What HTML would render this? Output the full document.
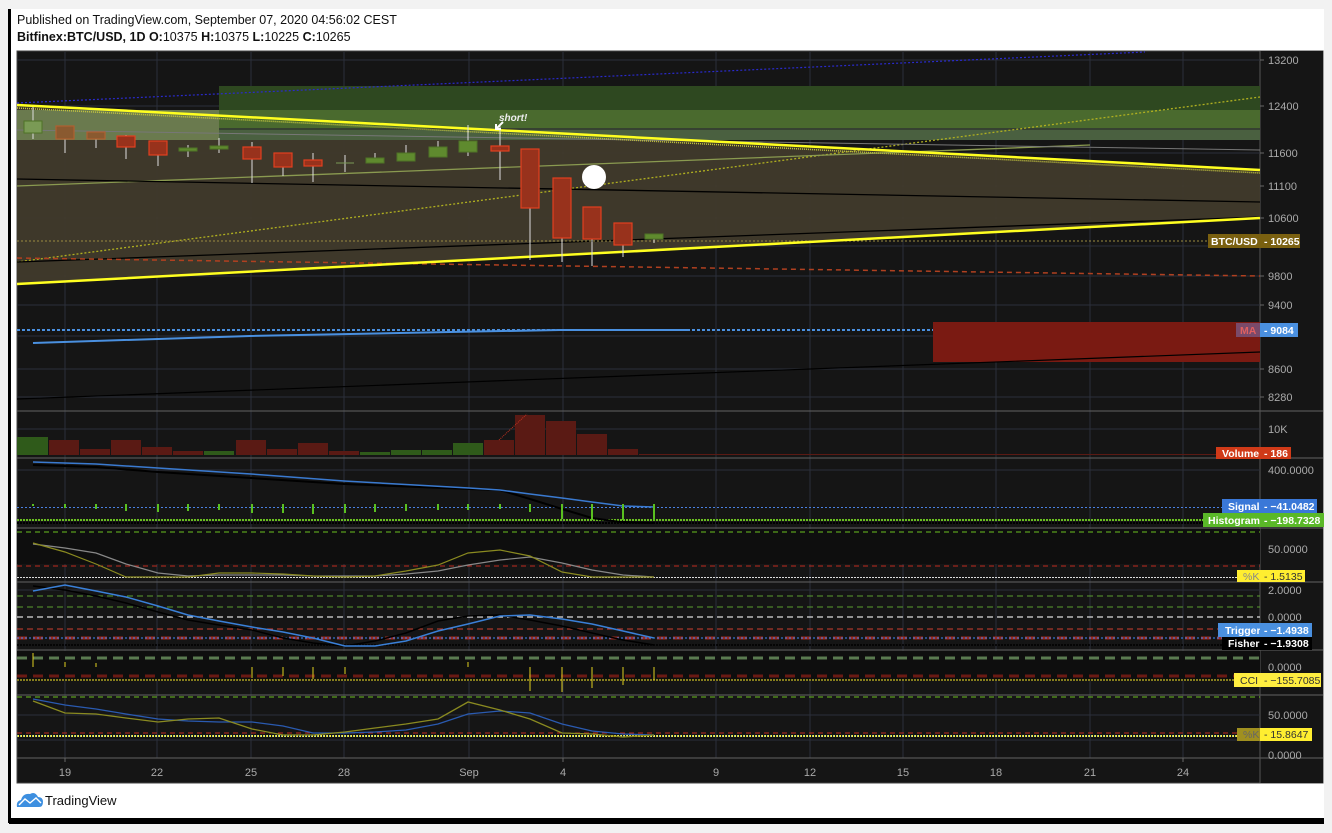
<!DOCTYPE html>
<html><head><meta charset="utf-8"><style>
html,body{margin:0;padding:0;background:#fff;width:1332px;height:833px;overflow:hidden}
svg{display:block}
text{font-family:"Liberation Sans",sans-serif}
</style></head><body>
<svg width="1332" height="833" viewBox="0 0 1332 833" xmlns="http://www.w3.org/2000/svg">
<rect x="0" y="0" width="1332" height="833" fill="#f2f2f2"/>
<rect x="9" y="9" width="1315" height="814" fill="#fff"/>
<rect x="8" y="9" width="3" height="814" fill="#000"/>
<rect x="9" y="818" width="1315" height="6" fill="#000"/>
<text x="17" y="24" font-size="12.5" fill="#111">Published on TradingView.com, September 07, 2020 04:56:02 CEST</text>
<text x="17" y="41" font-size="12.5" fill="#111"><tspan font-weight="bold">Bitfinex:BTC/USD, 1D  O:</tspan>10375 <tspan font-weight="bold">H:</tspan>10375 <tspan font-weight="bold">L:</tspan>10225 <tspan font-weight="bold">C:</tspan>10265</text>

<rect x="17" y="51" width="1306" height="732" fill="#151515" stroke="#444" stroke-width="1"/>
<rect x="1260" y="51" width="63" height="732" fill="#151515"/>
<line x1="1260" y1="51" x2="1260" y2="783" stroke="#555"/>

<g stroke="#2b303a" stroke-width="1">
<line x1="65" y1="52" x2="65" y2="758"/><line x1="157" y1="52" x2="157" y2="758"/>
<line x1="251" y1="52" x2="251" y2="758"/><line x1="344" y1="52" x2="344" y2="758"/>
<line x1="469" y1="52" x2="469" y2="758"/><line x1="563" y1="52" x2="563" y2="758"/>
<line x1="716" y1="52" x2="716" y2="758"/><line x1="810" y1="52" x2="810" y2="758"/>
<line x1="903" y1="52" x2="903" y2="758"/><line x1="996" y1="52" x2="996" y2="758"/>
<line x1="1090" y1="52" x2="1090" y2="758"/><line x1="1183" y1="52" x2="1183" y2="758"/>
</g>
<g stroke="#2b303a" stroke-width="1">
<line x1="17" y1="60" x2="1260" y2="60"/><line x1="17" y1="106" x2="1260" y2="106"/>
<line x1="17" y1="153" x2="1260" y2="153"/><line x1="17" y1="186" x2="1260" y2="186"/>
<line x1="17" y1="218" x2="1260" y2="218"/><line x1="17" y1="246" x2="1260" y2="246"/>
<line x1="17" y1="276" x2="1260" y2="276"/><line x1="17" y1="305" x2="1260" y2="305"/>
<line x1="17" y1="336" x2="1260" y2="336"/><line x1="17" y1="369" x2="1260" y2="369"/>
<line x1="17" y1="397" x2="1260" y2="397"/>
<line x1="17" y1="429" x2="1260" y2="429"/><line x1="17" y1="470" x2="1260" y2="470"/>
<line x1="17" y1="549" x2="1260" y2="549"/><line x1="17" y1="590" x2="1260" y2="590"/>
<line x1="17" y1="667" x2="1260" y2="667"/><line x1="17" y1="715" x2="1260" y2="715"/>
<line x1="17" y1="740" x2="1260" y2="740"/>
</g>
<g stroke="#555" stroke-width="1.2">
<line x1="17" y1="411" x2="1323" y2="411"/><line x1="17" y1="458" x2="1323" y2="458"/>
<line x1="17" y1="528" x2="1323" y2="528"/><line x1="17" y1="582" x2="1323" y2="582"/>
<line x1="17" y1="650" x2="1323" y2="650"/><line x1="17" y1="695" x2="1323" y2="695"/>
<line x1="17" y1="758" x2="1323" y2="758"/>
</g>

<polygon points="17,105 1260,170 1260,218 17,284" fill="#403a2b" opacity="0.95"/>
<rect x="219" y="86" width="1041" height="24" fill="#2e4820"/>
<rect x="219" y="110" width="1041" height="18" fill="#4a6a2e"/>
<rect x="219" y="128" width="1041" height="12" fill="#4a6040"/>
<line x1="219" y1="129" x2="1260" y2="129" stroke="#222" stroke-width="1"/>
<polygon points="17,110 219,110 219,140 17,140" fill="#6a7a4e"/>
<line x1="17" y1="103" x2="1145" y2="52" stroke="#2a2acc" stroke-width="1.2" stroke-dasharray="2,2"/>
<line x1="17" y1="262" x2="1260" y2="97" stroke="#b0b020" stroke-width="1.3" stroke-dasharray="2,2"/>
<line x1="17" y1="186" x2="1090" y2="145" stroke="#8a9a50" stroke-width="1.3"/>
<line x1="17" y1="130" x2="1260" y2="150" stroke="#777" stroke-width="1"/>
<line x1="17" y1="179" x2="1260" y2="202" stroke="#000" stroke-width="1.3"/>
<line x1="17" y1="262" x2="1260" y2="217" stroke="#000" stroke-width="1.3"/>
<line x1="17" y1="258" x2="1260" y2="276" stroke="#b04020" stroke-width="1.5" stroke-dasharray="5,4"/>
<line x1="17" y1="241" x2="1260" y2="241" stroke="#9a8a40" stroke-width="1" stroke-dasharray="2,2"/>
<line x1="17" y1="108" x2="1260" y2="173" stroke="#c8c840" stroke-width="1.5" stroke-dasharray="1,1"/>
<line x1="17" y1="105" x2="1260" y2="170" stroke="#ffff20" stroke-width="2.5"/>
<line x1="17" y1="284" x2="1260" y2="218" stroke="#ffff20" stroke-width="2.5"/>
<line x1="17" y1="330" x2="1260" y2="330" stroke="#4a90e0" stroke-width="2" stroke-dasharray="3,2"/>
<polyline points="33,343 250,336 450,332 560,330 690,330" fill="none" stroke="#4a90e0" stroke-width="2"/>
<rect x="933" y="322" width="327" height="40" fill="#7a1a12"/>
<line x1="17" y1="399" x2="1260" y2="352" stroke="#000" stroke-width="1.2"/>

<g stroke="#ddd" stroke-width="1">
<line x1="33" y1="107" x2="33" y2="139"/><line x1="65" y1="126" x2="65" y2="153"/>
<line x1="96" y1="132" x2="96" y2="148"/><line x1="126" y1="135" x2="126" y2="159"/>
<line x1="158" y1="141" x2="158" y2="166"/><line x1="188" y1="145" x2="188" y2="157"/>
<line x1="219" y1="138" x2="219" y2="153"/><line x1="252" y1="142" x2="252" y2="183"/>
<line x1="283" y1="153" x2="283" y2="176"/><line x1="313" y1="153" x2="313" y2="182"/>
<line x1="345" y1="155" x2="345" y2="172"/><line x1="375" y1="153" x2="375" y2="163"/>
<line x1="406" y1="145" x2="406" y2="161"/><line x1="438" y1="141" x2="438" y2="157"/>
<line x1="468" y1="125" x2="468" y2="156"/><line x1="500" y1="126" x2="500" y2="180"/>
<line x1="530" y1="149" x2="530" y2="260"/><line x1="562" y1="178" x2="562" y2="262"/>
<line x1="592" y1="207" x2="592" y2="266"/><line x1="623" y1="223" x2="623" y2="257"/>
<line x1="654" y1="234" x2="654" y2="243"/>
</g>
<g fill="#98321c" stroke="#e2401f" stroke-width="1.2">
<rect x="56" y="126" width="18" height="13" fill="#8a5a30" stroke="#b06030"/>
<rect x="87" y="132" width="18" height="7" fill="#8a5a30" stroke="#b06030"/>
<rect x="117" y="136" width="18" height="11"/>
<rect x="149" y="141" width="18" height="14"/>
<rect x="243" y="147" width="18" height="12"/>
<rect x="274" y="153" width="18" height="14"/>
<rect x="304" y="160" width="18" height="6"/>
<rect x="491" y="146" width="18" height="5"/>
<rect x="521" y="149" width="18" height="59"/>
<rect x="553" y="178" width="18" height="60"/>
<rect x="583" y="207" width="18" height="32"/>
<rect x="614" y="223" width="18" height="22"/>
</g>
<g fill="#5f8a2e" stroke="#4f7326" stroke-width="1">
<rect x="24" y="121" width="18" height="12" fill="#7a9a55"/>
<rect x="179" y="148" width="18" height="3"/>
<rect x="210" y="146" width="18" height="3"/>
<line x1="336" y1="163" x2="354" y2="163" stroke="#7a9a55"/>
<rect x="366" y="158" width="18" height="5"/>
<rect x="397" y="153" width="18" height="8"/>
<rect x="429" y="147" width="18" height="10"/>
<rect x="459" y="141" width="18" height="11"/>
<rect x="645" y="234" width="18" height="5"/>
</g>
<circle cx="594" cy="177" r="12" fill="#fff"/>
<text x="499" y="121" font-size="10" font-style="italic" font-weight="bold" fill="#eee">short!</text>
<path d="M503 122 L496 129 M496 124 L496 129 L501 129" stroke="#fff" stroke-width="2" fill="none"/>

<g fill="#5a1a14">
<rect x="49" y="440" width="30" height="15"/><rect x="80" y="449" width="30" height="6"/>
<rect x="111" y="440" width="30" height="15"/><rect x="142" y="447" width="30" height="8"/>
<rect x="173" y="451" width="30" height="4"/><rect x="236" y="440" width="30" height="15"/>
<rect x="267" y="449" width="30" height="6"/><rect x="298" y="443" width="30" height="12"/>
<rect x="329" y="451" width="30" height="4"/><rect x="484" y="440" width="30" height="15"/>
<rect x="515" y="415" width="30" height="40"/><rect x="546" y="421" width="30" height="34"/>
<rect x="577" y="434" width="30" height="21"/><rect x="608" y="449" width="30" height="6"/>
<rect x="639" y="454" width="621" height="1"/>
</g>
<g fill="#2f5a1a">
<rect x="17" y="437" width="31" height="18"/><rect x="204" y="451" width="30" height="4"/>
<rect x="360" y="452" width="30" height="3"/><rect x="391" y="450" width="30" height="5"/>
<rect x="422" y="450" width="30" height="5"/><rect x="453" y="443" width="30" height="12"/>
</g>
<line x1="499" y1="440" x2="527" y2="414" stroke="#c03020" stroke-dasharray="1,1"/>

<line x1="17" y1="507.5" x2="1260" y2="507.5" stroke="#4a80e0" stroke-dasharray="2,2"/>
<line x1="17" y1="520" x2="1260" y2="520" stroke="#6ac020" stroke-width="2" stroke-dasharray="2,1"/>
<line x1="17" y1="523" x2="1260" y2="523" stroke="#000" stroke-width="2" stroke-dasharray="2,1"/>
<polyline points="33,465 96,467 158,472 251,478 344,484 469,489 500,490 530,499 562,509 592,518 620,522 654,523" fill="none" stroke="#000" stroke-width="2"/>
<polyline points="33,462 96,464 158,468 251,474 344,481 469,488 500,490 530,494 562,498 592,502 623,506 654,507" fill="none" stroke="#3a7ad0" stroke-width="1.5"/>
<g stroke="#5ac020" stroke-width="2">
<line x1="33" y1="504" x2="33" y2="506"/><line x1="65" y1="504" x2="65" y2="508"/><line x1="96" y1="504" x2="96" y2="509"/><line x1="126" y1="504" x2="126" y2="511"/><line x1="158" y1="504" x2="158" y2="512"/><line x1="188" y1="504" x2="188" y2="511"/><line x1="219" y1="504" x2="219" y2="510"/><line x1="252" y1="504" x2="252" y2="513"/><line x1="283" y1="504" x2="283" y2="513"/><line x1="313" y1="504" x2="313" y2="514"/><line x1="345" y1="504" x2="345" y2="513"/><line x1="375" y1="504" x2="375" y2="512"/><line x1="406" y1="504" x2="406" y2="511"/><line x1="438" y1="504" x2="438" y2="510"/><line x1="468" y1="504" x2="468" y2="510"/><line x1="500" y1="504" x2="500" y2="509"/><line x1="530" y1="504" x2="530" y2="512"/><line x1="562" y1="504" x2="562" y2="519"/><line x1="592" y1="504" x2="592" y2="520"/><line x1="623" y1="504" x2="623" y2="520"/><line x1="654" y1="504" x2="654" y2="520"/>
</g>

<rect x="17" y="529" width="1243" height="35" fill="#0e0e0e"/>
<line x1="17" y1="532" x2="1260" y2="532" stroke="#6ac020" stroke-dasharray="5,4"/>
<line x1="17" y1="566" x2="1260" y2="566" stroke="#c02a20" stroke-dasharray="5,4"/>
<line x1="17" y1="577.5" x2="1260" y2="577.5" stroke="#ddd" stroke-dasharray="2,1"/>
<polyline points="33,544 65,548 96,553 126,564 158,573 188,576 219,575 252,575 283,575 313,576 345,576 375,576 406,574 438,571 468,565 500,560 530,557 562,563 592,570 623,575 654,577" fill="none" stroke="#888" stroke-width="1.2"/>
<polyline points="33,543 65,552 96,564 126,577 158,577 188,577 219,573 252,573 283,574 313,576 345,577 375,576 406,571 438,565 468,553 500,550 530,556 562,572 592,577 623,577 654,577" fill="none" stroke="#8a8a20" stroke-width="1.2"/>

<line x1="17" y1="596" x2="1260" y2="596" stroke="#5aa030" stroke-dasharray="6,4"/>
<line x1="17" y1="607" x2="1260" y2="607" stroke="#5aa030" stroke-dasharray="6,4"/>
<line x1="17" y1="617" x2="1260" y2="617" stroke="#ddd" stroke-width="1.3" stroke-dasharray="6,4"/>
<line x1="17" y1="629" x2="1260" y2="629" stroke="#d04030" stroke-dasharray="6,4"/>
<line x1="17" y1="638" x2="1260" y2="638" stroke="#9a2a20" stroke-width="3" stroke-dasharray="10,6"/>
<line x1="17" y1="638" x2="1260" y2="638" stroke="#3a8aff" stroke-dasharray="2,2"/>
<line x1="17" y1="645" x2="1260" y2="645" stroke="#000" stroke-width="1.5" stroke-dasharray="2,1"/>
<polyline points="33,586 65,590 96,596 126,603 158,612 188,620 219,625 252,630 283,638 313,643 345,646 375,641 406,633 438,621 468,616 500,615 530,620 562,626 592,633 623,640 654,645" fill="none" stroke="#000" stroke-width="1.5"/>
<polyline points="33,591 65,585 96,591 126,597 158,606 188,615 219,621 252,627 283,632 313,638 345,646 375,646 406,641 438,631 468,624 500,616 530,615 562,619 592,624 623,631 654,638" fill="none" stroke="#3a80d8" stroke-width="1.5"/>

<rect x="17" y="651" width="1243" height="30" fill="#0e0e0e"/>
<line x1="17" y1="658" x2="1260" y2="658" stroke="#5a7a50" stroke-width="3" stroke-dasharray="10,6"/>
<line x1="17" y1="676" x2="1260" y2="676" stroke="#6a1a14" stroke-width="3" stroke-dasharray="10,6"/>
<line x1="17" y1="680" x2="1260" y2="680" stroke="#ffee30" stroke-dasharray="2,1"/>
<g stroke="#e0d020" stroke-width="1">
<line x1="33" y1="653" x2="33" y2="667"/><line x1="65" y1="662" x2="65" y2="667"/><line x1="96" y1="663" x2="96" y2="667"/><line x1="252" y1="667" x2="252" y2="678"/><line x1="283" y1="667" x2="283" y2="676"/><line x1="313" y1="667" x2="313" y2="679"/><line x1="345" y1="667" x2="345" y2="674"/><line x1="468" y1="662" x2="468" y2="667"/><line x1="530" y1="667" x2="530" y2="691"/><line x1="562" y1="667" x2="562" y2="692"/><line x1="592" y1="667" x2="592" y2="688"/><line x1="623" y1="667" x2="623" y2="685"/><line x1="654" y1="667" x2="654" y2="680"/>
</g>

<line x1="17" y1="697" x2="1260" y2="697" stroke="#6ac020" stroke-dasharray="5,4"/>
<line x1="17" y1="733" x2="1260" y2="733" stroke="#c02a20" stroke-dasharray="5,4"/>
<line x1="17" y1="736" x2="1260" y2="736" stroke="#ffee30" stroke-width="2" stroke-dasharray="2,1"/>
<line x1="17" y1="736" x2="1260" y2="736" stroke="#4aa0ff" stroke-dasharray="1,2"/>
<polyline points="33,699 65,705 96,709 126,714 158,719 188,721 219,722 252,722 283,726 313,733 345,733 375,732 406,730 438,724 468,714 500,711 530,713 562,724 592,731 623,734 654,735" fill="none" stroke="#2a5ab0" stroke-width="1.3"/>
<polyline points="33,701 65,713 96,714 126,718 158,722 188,719 219,718 252,729 283,735 313,735 345,732 375,728 406,724 438,719 468,702 500,710 530,719 562,733 592,734 623,737 654,735" fill="none" stroke="#8a8a20" stroke-width="1.3"/>

<g font-size="11" fill="#aaa" text-anchor="middle">
<text x="65" y="776">19</text><text x="157" y="776">22</text><text x="251" y="776">25</text><text x="344" y="776">28</text><text x="469" y="776">Sep</text><text x="563" y="776">4</text><text x="716" y="776">9</text><text x="810" y="776">12</text><text x="903" y="776">15</text><text x="996" y="776">18</text><text x="1090" y="776">21</text><text x="1183" y="776">24</text>
</g>
<g stroke="#666"><line x1="65" y1="758" x2="65" y2="762"/><line x1="563" y1="758" x2="563" y2="762"/><line x1="1183" y1="758" x2="1183" y2="762"/></g>

<g font-size="11" fill="#aaa">
<text x="1268" y="64">13200</text><text x="1268" y="110">12400</text><text x="1268" y="157">11600</text><text x="1268" y="190">11100</text><text x="1268" y="222">10600</text><text x="1268" y="280">9800</text><text x="1268" y="309">9400</text><text x="1268" y="373">8600</text><text x="1268" y="401">8280</text>
<text x="1268" y="433">10K</text><text x="1268" y="474">400.0000</text><text x="1268" y="553">50.0000</text><text x="1268" y="594">2.0000</text><text x="1268" y="621">0.0000</text><text x="1268" y="671">0.0000</text><text x="1268" y="719">50.0000</text><text x="1268" y="759">0.0000</text>
</g>
<g stroke="#666"><line x1="1260" y1="60" x2="1264" y2="60"/><line x1="1260" y1="106" x2="1264" y2="106"/><line x1="1260" y1="153" x2="1264" y2="153"/><line x1="1260" y1="186" x2="1264" y2="186"/><line x1="1260" y1="218" x2="1264" y2="218"/><line x1="1260" y1="276" x2="1264" y2="276"/><line x1="1260" y1="305" x2="1264" y2="305"/><line x1="1260" y1="369" x2="1264" y2="369"/><line x1="1260" y1="397" x2="1264" y2="397"/></g>

<g font-size="10.5" font-weight="bold">
<rect x="1208" y="234" width="52" height="14" fill="#7a6010"/><text x="1211" y="245" fill="#fff">BTC/USD</text>
<rect x="1260" y="234" width="40" height="14" fill="#7a6010"/><text x="1264" y="245" fill="#fff">- 10265</text>
<rect x="1236" y="323" width="24" height="14" fill="#7a4a6a"/><text x="1240" y="334" fill="#e06060">MA</text>
<rect x="1260" y="323" width="38" height="14" fill="#4a90e0"/><text x="1264" y="334" fill="#fff">- 9084</text>
<rect x="1216" y="447" width="44" height="12" fill="#d03a18"/><text x="1222" y="457" fill="#fff">Volume</text>
<rect x="1260" y="447" width="31" height="12" fill="#d03a18"/><text x="1264" y="457" fill="#fff">- 186</text>
<rect x="1222" y="499" width="38" height="14" fill="#3a78d8"/><text x="1228" y="510" fill="#fff">Signal</text>
<rect x="1260" y="499" width="57" height="14" fill="#3a78d8"/><text x="1264" y="510" fill="#fff">- −41.0482</text>
<rect x="1203" y="513" width="57" height="14" fill="#5ab828"/><text x="1208" y="524" fill="#fff">Histogram</text>
<rect x="1260" y="513" width="64" height="14" fill="#5ab828"/><text x="1264" y="524" fill="#fff">- −198.7328</text>
<rect x="1237" y="570" width="23" height="12" fill="#ffee30"/><text x="1243" y="580" fill="#888" font-weight="normal">%K</text>
<rect x="1260" y="570" width="45" height="12" fill="#ffee30"/><text x="1264" y="580" fill="#333" font-weight="normal">- 1.5135</text>
<rect x="1218" y="623" width="42" height="14" fill="#4a90e0"/><text x="1225" y="634" fill="#fff">Trigger</text>
<rect x="1260" y="623" width="52" height="14" fill="#4a90e0"/><text x="1264" y="634" fill="#fff">- −1.4938</text>
<rect x="1222" y="637" width="38" height="13" fill="#000"/><text x="1228" y="647" fill="#fff">Fisher</text>
<rect x="1260" y="637" width="52" height="13" fill="#000"/><text x="1264" y="647" fill="#fff">- −1.9308</text>
<rect x="1234" y="673" width="26" height="14" fill="#ffee40"/><text x="1240" y="684" fill="#333" font-weight="normal">CCI</text>
<rect x="1260" y="673" width="61" height="14" fill="#ffee40"/><text x="1264" y="684" fill="#333" font-weight="normal">- −155.7085</text>
<rect x="1237" y="728" width="23" height="13" fill="#a09020"/><text x="1243" y="738" fill="#666" font-weight="normal">%K</text>
<rect x="1260" y="728" width="52" height="13" fill="#ffee30"/><text x="1264" y="738" fill="#333" font-weight="normal">- 15.8647</text>
</g>

<path d="M17 807 Q16 801 21 800 Q23 793 30 794 Q35 791 38 797 Q43 797 43 802 Q43 807 39 807 Z" fill="#3d8fe0"/>
<path d="M19 805 L25 799 L30 803 L36 798 L41 803" stroke="#fff" stroke-width="1.4" fill="none"/>
<text x="45" y="805" font-size="13" fill="#111">TradingView</text>
</svg>
</body></html>
